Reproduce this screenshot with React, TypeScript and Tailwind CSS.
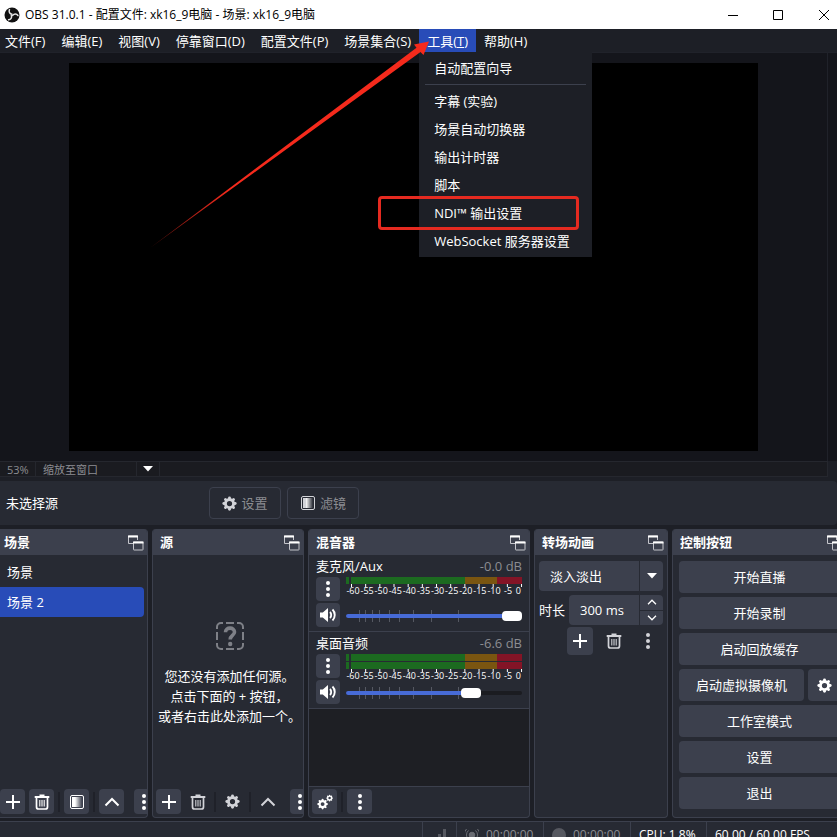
import { useState } from 'react';
import type { ButtonHTMLAttributes, ReactNode } from 'react';
import clsx from 'clsx';

const MENUS = ['文件(F)', '编辑(E)', '视图(V)', '停靠窗口(D)', '配置文件(P)', '场景集合(S)'];
const TOOL_ITEMS = ['字幕 (实验)', '场景自动切换器', '输出计时器', '脚本', 'NDI™ 输出设置', 'WebSocket 服务器设置'];
const DB_MARKS = [-60, -55, -50, -45, -40, -35, -30, -25, -20, -15, -10, -5, 0];
const FADER_TICKS = [13, 19, 26, 33, 43, 53, 67, 85, 112];
const GEAR_ANGLES = [0, 45, 90, 135, 180, 225, 270, 315];

// ---- icons ----

function GearShape() {
  return (
    <g fill="none" stroke="currentColor">
      <circle cx="8" cy="8" r="4.3" strokeWidth="3" />
      {GEAR_ANGLES.map((a) => (
        <path key={a} d="M8 2.8V1.9" strokeWidth="3" strokeLinecap="round" transform={`rotate(${a} 8 8)`} />
      ))}
    </g>
  );
}

function GearIcon() {
  return (
    <svg viewBox="0 0 16 16" className="size-[15px] shrink-0">
      <GearShape />
    </svg>
  );
}

function GearsIcon() {
  return (
    <svg viewBox="0 0 18 18" className="size-[18px]">
      <g transform="translate(1 5.5) scale(.7)">
        <GearShape />
      </g>
      <g transform="translate(10 1.5) scale(.45)">
        <GearShape />
      </g>
    </svg>
  );
}

function FilterIcon() {
  return (
    <svg viewBox="0 0 16 16" className="size-4 shrink-0">
      <defs>
        <linearGradient id="fade">
          <stop offset="0" stopColor="#fff" />
          <stop offset="1" stopColor="#fff" stopOpacity="0" />
        </linearGradient>
      </defs>
      <rect x="1.5" y="1.5" width="13" height="13" rx="1.5" fill="none" stroke="currentColor" />
      <rect x="3" y="3" width="3" height="10" fill="currentColor" />
      <rect x="6" y="3" width="7" height="10" fill="url(#fade)" />
    </svg>
  );
}

function PlusIcon() {
  return (
    <svg viewBox="0 0 16 16" className="size-4">
      <path d="M8 1v14M1 8h14" stroke="currentColor" strokeWidth="2" />
    </svg>
  );
}

function TrashIcon() {
  return (
    <svg viewBox="0 0 16 16" className="size-4" fill="none" stroke="currentColor">
      <path d="M5.5 1.2h5" strokeWidth="1.4" />
      <path d="M.7 3h14.6" strokeWidth="1.8" />
      <path d="M2.5 4v9a2 2 0 0 0 2 2h7a2 2 0 0 0 2-2V4" strokeWidth="1.7" />
      <path d="M5.8 6v6.5M8 6v6.5M10.2 6v6.5" strokeWidth="1.1" />
    </svg>
  );
}

function DotsIcon() {
  return (
    <svg viewBox="0 0 16 16" className="size-4" fill="currentColor">
      <circle cx="8" cy="2" r="2" />
      <circle cx="8" cy="8" r="2" />
      <circle cx="8" cy="14" r="2" />
    </svg>
  );
}

function ChevronUpIcon() {
  return (
    <svg viewBox="0 0 16 16" className="size-4">
      <path d="M1.5 11.5 8 5l6.5 6.5" fill="none" stroke="currentColor" strokeWidth="2" />
    </svg>
  );
}

function SpeakerIcon() {
  return (
    <svg viewBox="0 0 18 16" className="h-4 w-[18px]">
      <path d="M1 5.5h2.8L9 1v14l-5.2-4.5H1z" fill="currentColor" />
      <path d="M11 5c1.6 1.5 1.6 4.5 0 6M13.5 2.5c3 3 3 8 0 11" fill="none" stroke="currentColor" strokeWidth="1.9" />
    </svg>
  );
}

function FloatIcon() {
  return (
    <svg viewBox="0 0 17 17" className="size-[17px] text-[#c4c5cb]" fill="none" stroke="currentColor">
      <path d="M6 9.5H1.5V2h9v4" />
      <path d="M1 2.5h10" stroke="#fff" strokeWidth="2" />
      <rect x="6.5" y="8" width="9.5" height="8" rx=".5" />
      <path d="M6 8.5h10.5" stroke="#fff" strokeWidth="2" />
    </svg>
  );
}

function UnknownIcon() {
  return (
    <svg viewBox="0 0 28 28" className="size-7 text-[#7e8087]" fill="none" stroke="currentColor">
      <g strokeWidth="2">
        <path d="M1 7V5a4 4 0 0 1 4-4h2M21 1h2a4 4 0 0 1 4 4v2M27 21v2a4 4 0 0 1-4 4h-2M7 27H5a4 4 0 0 1-4-4v-2" />
        <path d="M10 1h8M10 27h8M1 10v8M27 10v8" />
      </g>
      <path d="M9.5 10.2C9.5 4.8 18.5 4.8 18.5 10c0 3.5-4.3 3.5-4.3 7.5" strokeWidth="3.6" />
      <circle cx="14.2" cy="22" r="2.2" fill="currentColor" stroke="none" />
    </svg>
  );
}

function ObsLogo() {
  return (
    <svg viewBox="0 0 16 16" className="size-4">
      <circle cx="8" cy="8" r="7.5" fill="#111" />
      <g fill="none" stroke="#e6e6e6" strokeWidth="1.5" strokeLinecap="round">
        <path d="M5.5 2.6c-1 2 .2 4.3 2.5 4.6" />
        <path d="M5.5 2.6c-1 2 .2 4.3 2.5 4.6" transform="rotate(120 8 8)" />
        <path d="M5.5 2.6c-1 2 .2 4.3 2.5 4.6" transform="rotate(240 8 8)" />
      </g>
    </svg>
  );
}

function Caret() {
  return (
    <svg viewBox="0 0 10 6" className="h-[6px] w-[10px]">
      <path d="M0 0h10L5 5.5z" fill="#fff" />
    </svg>
  );
}

// ---- shared pieces ----

type IconButtonProps = ButtonHTMLAttributes<HTMLButtonElement> & { label: string; flat?: boolean; size?: string };

function IconButton({ label, flat, size = 'size-[25px]', children, ...rest }: IconButtonProps) {
  return (
    <button
      type="button"
      aria-label={label}
      className={clsx(
        'flex shrink-0 items-center justify-center rounded',
        size,
        flat ? 'text-[#d2d3d8]' : 'bg-[#3c404d] text-white'
      )}
      {...rest}
    >
      {children}
    </button>
  );
}

function Divider() {
  return <span className="h-5 w-[2px] shrink-0 bg-[#1f2129]" />;
}

function Dock({ title, children }: { title: string; children: ReactNode }) {
  return (
    <section className="flex min-w-0 flex-col overflow-hidden rounded border border-t-0 border-[#3c404d] bg-[#272a33]">
      <header className="flex h-[26px] shrink-0 items-center justify-between bg-[#3c404d] pr-[3px] pl-[7px]">
        <h2 className="font-bold">{title}</h2>
        <button type="button" aria-label="浮动">
          <FloatIcon />
        </button>
      </header>
      {children}
    </section>
  );
}

function WideButton({ children }: { children: ReactNode }) {
  return (
    <button type="button" className="h-8 min-w-0 flex-1 rounded bg-[#3c404d]">
      {children}
    </button>
  );
}

// ---- top of the window ----

function TitleBar() {
  return (
    <div className="flex h-[29px] shrink-0 items-center bg-white pl-1 text-black">
      <ObsLogo />
      <span className="pl-[5px] text-xs">OBS 31.0.1 - 配置文件: xk16_9电脑 - 场景: xk16_9电脑</span>
      <div className="ml-auto flex">
        <button type="button" aria-label="最小化" className="w-[45px]">
          <svg viewBox="0 0 12 12" className="mx-auto size-3">
            <path d="M1 6.5h10" stroke="#000" />
          </svg>
        </button>
        <button type="button" aria-label="最大化" className="w-[45px]">
          <svg viewBox="0 0 12 12" className="mx-auto size-3">
            <path d="M1.5 1.5h9v9h-9z" fill="none" stroke="#000" />
          </svg>
        </button>
        <button type="button" aria-label="关闭" className="w-[37px] pl-[18px]">
          <svg viewBox="0 0 12 12" className="size-3">
            <path d="m1 1 10 10M11 1 1 11" stroke="#000" />
          </svg>
        </button>
      </div>
    </div>
  );
}

function ToolsMenu() {
  return (
    <div role="menu" className="absolute top-full left-0 z-10 w-[173px] bg-[#1d1f26] py-[2px]">
      <button type="button" role="menuitem" className="block h-7 w-full px-[15px] text-left">
        自动配置向导
      </button>
      <hr className="mx-[6px] my-[2px] border-[#3c404d]" />
      {TOOL_ITEMS.map((item) => (
        <button key={item} type="button" role="menuitem" className="relative block h-7 w-full px-[15px] text-left whitespace-nowrap">
          {item}
          {item.startsWith('NDI') && (
            <span className="absolute -inset-y-[3px] right-[13px] -left-[41px] rounded border-3 border-[#e52a20]" />
          )}
        </button>
      ))}
    </div>
  );
}

function MenuBar() {
  return (
    <nav className="-ml-[3px] flex h-[23px] shrink-0 bg-[#1d1f26]">
      {MENUS.map((m) => (
        <button key={m} type="button" className="px-2 whitespace-nowrap">
          {m}
        </button>
      ))}
      <div className="relative">
        <button type="button" className="h-full bg-[#284cb8] px-2 whitespace-nowrap">
          工具(<u>T</u>)
        </button>
        <ToolsMenu />
      </div>
      <button type="button" className="px-2 whitespace-nowrap">
        帮助(H)
      </button>
    </nav>
  );
}

function Arrow() {
  return (
    <svg viewBox="0 0 440 260" className="pointer-events-none absolute top-0 left-0 z-20 h-[260px] w-[440px]">
      <defs>
        <linearGradient id="tail" gradientUnits="userSpaceOnUse" x1="150" y1="247" x2="230" y2="190">
          <stop offset="0" stopColor="#f52a1c" stopOpacity=".4" />
          <stop offset="1" stopColor="#f52a1c" />
        </linearGradient>
      </defs>
      <path d="M150 248 416.5 47.8 414 44.5 429 41.5 423.5 55 420.5 52z" fill="url(#tail)" />
    </svg>
  );
}

function Preview() {
  return (
    <div className="flex min-h-0 flex-1 bg-[#14151b]">
      <div className="flex flex-1 justify-center border-t border-r border-[#20222a] py-[10px]">
        <div className="aspect-video h-full bg-black" />
      </div>
      <div className="w-[9px] border-t border-[#20222a]" />
    </div>
  );
}

function ZoomBar() {
  return (
    <div className="mr-[9px] flex h-4 shrink-0 border-y border-r border-[#25272e] bg-[#1a1b20] text-[11px] leading-4 text-[#8c8d92]">
      <span className="w-9 border-r border-[#25272e] pl-[7px]">53%</span>
      <label className="relative flex w-[124px] border-r border-[#25272e]">
        <select aria-label="预览缩放" className="w-full appearance-none pl-[7px]">
          <option>缩放至窗口</option>
        </select>
        <span className="pointer-events-none absolute inset-y-0 right-0 flex w-[23px] items-center justify-center border-l border-[#25272e]">
          <Caret />
        </span>
      </label>
    </div>
  );
}

function ContextBar() {
  return (
    <div className="-ml-1 my-1 flex h-11 shrink-0 items-center rounded bg-[#272a33] pl-[10px]">
      <span className="w-[203px]">未选择源</span>
      <div className="flex gap-[6px] text-[#8c8d92]">
        <button type="button" disabled className="flex h-8 w-[72px] items-center justify-center gap-1 rounded border border-[#3c404d]">
          <span className="text-[#d2d3d8]">
            <GearIcon />
          </span>
          设置
        </button>
        <button type="button" disabled className="flex h-8 w-[72px] items-center justify-center gap-1 rounded border border-[#3c404d]">
          <span className="text-[#d2d3d8]">
            <FilterIcon />
          </span>
          滤镜
        </button>
      </div>
    </div>
  );
}

// ---- docks ----

function ScenesDock() {
  const [active, setActive] = useState('场景 2');
  return (
    <Dock title="场景">
      <ul className="flex-1 py-[2px] pr-[3px]">
        {['场景', '场景 2'].map((s) => (
          <li key={s}>
            <button
              type="button"
              onClick={() => setActive(s)}
              className={clsx('h-[30px] w-full rounded pl-[10px] text-left', s === active && 'bg-[#284cb8]')}
            >
              {s}
            </button>
          </li>
        ))}
      </ul>
      <div className="flex items-center gap-1 pb-[3px] pl-[3px]">
        <IconButton label="添加场景"><PlusIcon /></IconButton>
        <IconButton label="移除场景"><TrashIcon /></IconButton>
        <Divider />
        <IconButton label="场景滤镜"><FilterIcon /></IconButton>
        <Divider />
        <IconButton label="上移场景"><ChevronUpIcon /></IconButton>
        <span className="w-[2px] shrink-0" />
        <IconButton label="更多" size="h-[25px] w-5"><DotsIcon /></IconButton>
      </div>
    </Dock>
  );
}

function SourcesDock() {
  return (
    <Dock title="源">
      <div className="flex flex-1 flex-col items-center justify-center pt-[3px] pl-[3px] whitespace-nowrap">
        <UnknownIcon />
        <p className="mt-4 text-center leading-5">
          您还没有添加任何源。
          <br />
          点击下面的 + 按钮，
          <br />
          或者右击此处添加一个。
        </p>
      </div>
      <div className="flex items-center gap-1 pb-[3px] pl-[3px]">
        <IconButton label="添加源"><PlusIcon /></IconButton>
        <IconButton label="移除源" flat><TrashIcon /></IconButton>
        <Divider />
        <IconButton label="源属性" flat><GearIcon /></IconButton>
        <Divider />
        <IconButton label="上移源" flat><ChevronUpIcon /></IconButton>
        <span className="w-[2px] shrink-0" />
        <IconButton label="更多" size="h-[25px] w-5"><DotsIcon /></IconButton>
      </div>
    </Dock>
  );
}

function Meter({ stereo }: { stereo?: boolean }) {
  const bars = stereo ? [0, 8] : [0];
  const base = stereo ? 15 : 7;
  return (
    <svg viewBox={stereo ? '0 0 176 28' : '0 0 176 20'} className="block w-full overflow-visible">
      {bars.map((y) => (
        <g key={y}>
          <rect x="0" y={y} width="3" height="7" fill="#1c6a20" />
          <rect x="5" y={y} width="114" height="7" fill="#1c6a20" />
          <rect x="119" y={y} width="32" height="7" fill="#7a5510" />
          <rect x="151" y={y} width="25" height="7" fill="#831426" />
        </g>
      ))}
      {DB_MARKS.map((db, i) => (
        <g key={db}>
          <path d={`M${5.5 + i * 14.17} ${base}v3`} stroke="#fff" />
          <text
            x={db === 0 ? 175 : 7 + i * 14.1}
            y={base + 10}
            textAnchor={db === 0 ? 'end' : 'middle'}
            fontSize="9"
            fill="#fff"
          >
            {db}
          </text>
        </g>
      ))}
    </svg>
  );
}

function Fader({ label, initial }: { label: string; initial: number }) {
  const [value, setValue] = useState(initial);
  return (
    <div className="relative h-3">
      <svg viewBox="0 0 176 12" className="absolute inset-0 size-full">
        {FADER_TICKS.map((x) => (
          <path key={x} d={`M${x + 0.5} 0v12`} stroke="#555862" />
        ))}
      </svg>
      <div className="absolute inset-x-0 top-1 h-1 rounded-full bg-[#1b1c21]">
        <div className="h-full rounded-full bg-[#476bd7]" style={{ width: `${value}%` }} />
      </div>
      <input
        type="range"
        aria-label={label}
        value={value}
        onChange={(e) => setValue(Number(e.target.value))}
        className="absolute inset-0 size-full appearance-none bg-transparent [&::-webkit-slider-thumb]:h-[10px] [&::-webkit-slider-thumb]:w-5 [&::-webkit-slider-thumb]:appearance-none [&::-webkit-slider-thumb]:rounded [&::-webkit-slider-thumb]:bg-white"
      />
    </div>
  );
}

function Channel({ name, db, level, stereo }: { name: string; db: string; level: number; stereo?: boolean }) {
  return (
    <div className="border-b border-[#3c404d] px-[7px] pb-1">
      <div className="flex h-[22px] items-center justify-between">
        <span>{name}</span>
        <span className="text-[#8c8d92]">{db}</span>
      </div>
      <div className="flex gap-[6px]">
        <div className="flex flex-col gap-[2px]">
          <IconButton label={`${name} 选项`} size="size-6"><DotsIcon /></IconButton>
          <IconButton label={`${name} 静音`} size="size-6"><SpeakerIcon /></IconButton>
        </div>
        <div className="flex min-w-0 flex-1 flex-col justify-between pb-[5px]">
          <Meter stereo={stereo} />
          <Fader label={name} initial={level} />
        </div>
      </div>
    </div>
  );
}

function MixerDock() {
  return (
    <Dock title="混音器">
      <Channel name="麦克风/Aux" db="-0.0 dB" level={100} />
      <Channel name="桌面音频" db="-6.6 dB" level={74} stereo />
      <div className="flex-1 border-b border-[#3c404d] bg-[#1e1f24]" />
      <div className="flex items-center gap-1 pt-[2px] pb-[3px] pl-[3px]">
        <IconButton label="高级音频属性"><GearsIcon /></IconButton>
        <Divider />
        <IconButton label="混音器菜单"><DotsIcon /></IconButton>
      </div>
    </Dock>
  );
}

function TransitionsDock() {
  return (
    <Dock title="转场动画">
      <div className="flex flex-col gap-1 px-1 pt-[6px]">
        <div className="relative flex h-[30px]">
          <select aria-label="转场" className="w-full appearance-none rounded bg-[#3c404d] pl-[11px]">
            <option>淡入淡出</option>
          </select>
          <span className="pointer-events-none absolute inset-y-0 right-0 flex w-6 items-center justify-center border-l border-[#272a33]">
            <Caret />
          </span>
        </div>
        <div className="flex items-center gap-1">
          <label htmlFor="duration" className="w-[26px] shrink-0">时长</label>
          <div className="flex h-[30px] min-w-0 flex-1 overflow-hidden rounded bg-[#3c404d]">
            <input id="duration" defaultValue="300 ms" className="w-full min-w-0 pl-[11px]" />
            <div className="flex w-6 shrink-0 flex-col border-l border-[#272a33]">
              <button type="button" aria-label="增加" className="flex flex-1 items-center justify-center border-b border-[#272a33]">
                <svg viewBox="0 0 10 6" className="h-[6px] w-[10px]">
                  <path d="M1 5.2 5 1.2l4 4" fill="none" stroke="#fff" strokeWidth="1.3" />
                </svg>
              </button>
              <button type="button" aria-label="减少" className="flex flex-1 items-center justify-center">
                <svg viewBox="0 0 10 6" className="h-[6px] w-[10px]">
                  <path d="M1 .8 5 4.8l4-4" fill="none" stroke="#fff" strokeWidth="1.3" />
                </svg>
              </button>
            </div>
          </div>
        </div>
      </div>
      <div className="flex justify-end gap-2 px-[6px] pt-[2px]">
        <IconButton label="添加转场" size="h-7 w-[26px]"><PlusIcon /></IconButton>
        <IconButton label="移除转场" size="h-7 w-[26px]" flat><TrashIcon /></IconButton>
        <IconButton label="转场属性" size="h-7 w-[26px]" flat><DotsIcon /></IconButton>
      </div>
    </Dock>
  );
}

function ControlsDock() {
  return (
    <Dock title="控制按钮">
      <div className="flex flex-col gap-1 px-[6px] pt-[6px] pb-2">
        <div className="flex"><WideButton>开始直播</WideButton></div>
        <div className="flex"><WideButton>开始录制</WideButton></div>
        <div className="flex"><WideButton>启动回放缓存</WideButton></div>
        <div className="flex gap-1">
          <WideButton>启动虚拟摄像机</WideButton>
          <IconButton label="虚拟摄像机设置" size="h-8 w-8"><GearIcon /></IconButton>
        </div>
        <div className="flex"><WideButton>工作室模式</WideButton></div>
        <div className="flex"><WideButton>设置</WideButton></div>
        <div className="flex"><WideButton>退出</WideButton></div>
      </div>
    </Dock>
  );
}

function StatusBar() {
  return (
    <footer className="mt-[3px] h-4 shrink-0 overflow-hidden border-t border-[#3c404d] bg-[#272a33] text-xs">
      <div className="flex h-[26px] justify-end">
        <div className="flex w-[34px] items-center justify-center border-l border-[#3c404d]">
          <svg viewBox="0 0 12 12" className="size-3" fill="#565860">
            <path d="M0 9h3v3H0zM4 5h3v7H4zM9 0h3v12H9z" />
          </svg>
        </div>
        <div className="flex w-[87px] items-center gap-[7px] border-l border-[#3c404d] pl-2 text-[#8c8d92]">
          <svg viewBox="0 0 14 14" className="size-[14px]" fill="none" stroke="#6a6c73">
            <circle cx="7" cy="7" r="2.8" fill="#6a6c73" />
            <path d="M3.5 2.5a6 6 0 0 0 0 9M10.5 2.5a6 6 0 0 1 0 9M1.5 1a9 9 0 0 0 0 12M12.5 1a9 9 0 0 1 0 12" />
          </svg>
          00:00:00
        </div>
        <div className="flex w-[87px] items-center gap-[7px] border-l border-[#3c404d] pl-2 text-[#8c8d92]">
          <span className="size-[14px] rounded-full bg-[#565860]" />
          00:00:00
        </div>
        <div className="flex w-[76px] items-center border-l border-[#3c404d] pl-2">CPU: 1.8%</div>
        <div className="flex w-[131px] items-center border-l border-[#3c404d] pl-2">60.00 / 60.00 FPS</div>
      </div>
    </footer>
  );
}

export default function App() {
  return (
    <div className="relative flex h-screen flex-col overflow-hidden bg-[#1d1f26] font-['Open_Sans','Noto_Sans_CJK_SC',sans-serif] text-[13px] leading-5 text-white">
      <TitleBar />
      <MenuBar />
      <Preview />
      <ZoomBar />
      <ContextBar />
      {/* the dock row runs slightly past both window edges */}
      <main className="-mr-[10px] -ml-1 grid shrink-0 grid-cols-[152fr_152fr_222fr_134fr_175fr] gap-1">
        <ScenesDock />
        <SourcesDock />
        <MixerDock />
        <TransitionsDock />
        <ControlsDock />
      </main>
      <StatusBar />
      <Arrow />
    </div>
  );
}
